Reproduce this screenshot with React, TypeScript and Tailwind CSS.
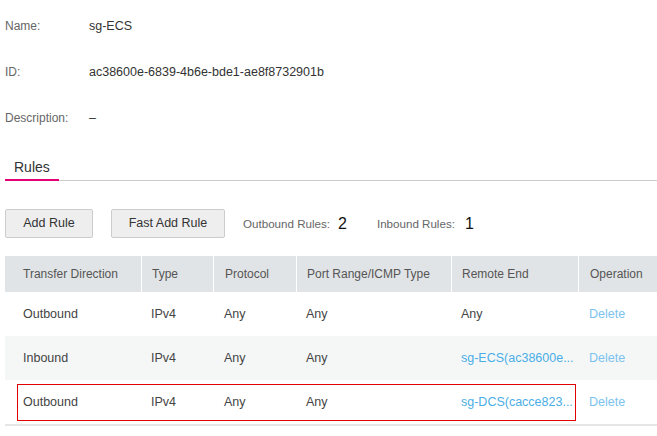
import React from 'react'

const font = { fontFamily: '"Liberation Sans", Arial, sans-serif' }

const info = [
  { label: 'Name:', value: 'sg-ECS' },
  { label: 'ID:', value: 'ac38600e-6839-4b6e-bde1-ae8f8732901b' },
  { label: 'Description:', value: '–' },
]

const columns = [
  { name: 'Transfer Direction', w: 'w-[136px]', pad: 'pl-[18px]' },
  { name: 'Type', w: 'w-[72px]', pad: 'pl-[10px]' },
  { name: 'Protocol', w: 'w-[83px]', pad: 'pl-[11px]' },
  { name: 'Port Range/ICMP Type', w: 'w-[155px]', pad: 'pl-[10px]' },
  { name: 'Remote End', w: 'w-[127px]', pad: 'pl-[10px]' },
  { name: 'Operation', w: 'w-[79px]', pad: 'pl-[11px]' },
]

const rules = [
  { dir: 'Outbound', remote: 'Any', link: false },
  { dir: 'Inbound', remote: 'sg-ECS(ac38600e...', link: true },
  { dir: 'Outbound', remote: 'sg-DCS(cacce823...', link: true },
]

const App: React.FC = () => {
  return (
    <div className="w-[657px] h-[436px] overflow-hidden bg-white pl-[5px] pt-[3px]" style={font}>
      {/* basic info */}
      <div className="flex flex-col">
        {info.map((item) => (
          <div key={item.label} className="flex items-center h-[46px]">
            <span className="w-[84px] text-[12px] text-[#666]">{item.label}</span>
            <span className="text-[12.5px] text-[#333]">{item.value}</span>
          </div>
        ))}
      </div>

      {/* tabs */}
      <div className="mt-[16px] flex border-b border-[#cccccc]">
        <div className="h-[24px] -mb-px px-[9px] pb-[1px] flex items-center border-b-2 border-[#e20074] text-[14px] text-[#333]">
          Rules
        </div>
      </div>

      {/* toolbar */}
      <div className="mt-[28px] flex items-center h-[29px]">
        <button className="h-[29px] w-[88px] rounded-[2px] border border-[#cccccc] bg-[#eeeeee] text-[12.5px] text-[#333]">
          Add Rule
        </button>
        <button className="ml-[18px] h-[29px] w-[114px] rounded-[2px] border border-[#cccccc] bg-[#eeeeee] text-[12.5px] text-[#333]">
          Fast Add Rule
        </button>
        <span className="ml-[18px] text-[11.6px] text-[#666]">Outbound Rules:</span>
        <span className="ml-[8px] text-[16px] text-[#111]">2</span>
        <span className="ml-[30px] text-[11.6px] text-[#666]">Inbound Rules:</span>
        <span className="ml-[10px] text-[16px] text-[#111]">1</span>
      </div>

      {/* table */}
      <div className="relative mt-[18px] w-[652px]">
        <div className="flex h-[36px] bg-[#e1e4e6]">
          {columns.map((c, i) => (
            <div
              key={c.name}
              className={`${c.w} ${c.pad} flex items-center text-[12px] text-[#555] ${i > 0 ? 'border-l border-white' : ''}`}
            >
              {c.name}
            </div>
          ))}
        </div>
        <div className="border-b-2 border-[#e6e6e6]">
          {rules.map((r, i) => (
            <div key={i} className={`flex h-[44px] text-[12.5px] text-[#444] ${i === 1 ? 'bg-[#f5f7f7]' : 'bg-white'}`}>
              <div className="w-[136px] pl-[18px] flex items-center">{r.dir}</div>
              <div className="w-[72px] pl-[10px] flex items-center">IPv4</div>
              <div className="w-[83px] pl-[11px] flex items-center">Any</div>
              <div className="w-[155px] pl-[10px] flex items-center">Any</div>
              <div className={`w-[127px] pl-[10px] flex items-center whitespace-nowrap ${r.link ? 'text-[#4aaee6]' : ''}`}>
                {r.remote}
              </div>
              <div className="w-[79px] pl-[11px] flex items-center text-[#7cc2ee]">Delete</div>
            </div>
          ))}
        </div>
        {/* highlight annotation */}
        <div className="absolute left-[12px] top-[128px] w-[559px] h-[37px] border border-[#e00000] pointer-events-none" />
      </div>
    </div>
  )
}

export default App
